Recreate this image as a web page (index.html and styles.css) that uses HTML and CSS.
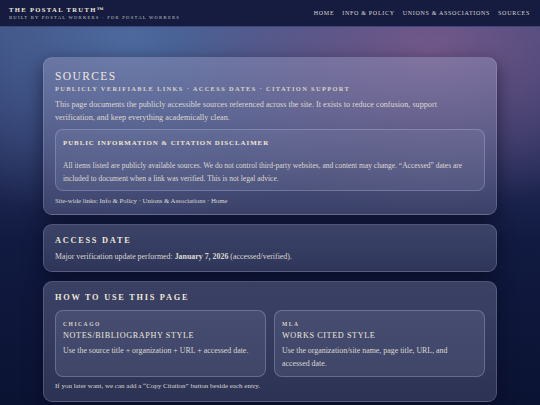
FILE: index.html
```html
<!DOCTYPE html>
<html lang="en">
<head>
<meta charset="utf-8">
<title>Sources · The Postal Truth</title>
<link rel="stylesheet" href="styles.css">
</head>
<body>
<header class="topbar">
  <div class="brand">
    <div class="brand-title">The Postal Truth™</div>
    <div class="brand-sub">Built by Postal Workers · For Postal Workers</div>
  </div>
  <nav class="nav">
    <a href="#">Home</a>
    <a href="#">Info &amp; Policy</a>
    <a href="#">Unions &amp; Associations</a>
    <a href="#">Sources</a>
  </nav>
</header>
<main class="main">
  <section class="card card-hero">
    <h1 class="page-title">Sources</h1>
    <div class="page-sub">Publicly verifiable links · Access dates · Citation support</div>
    <p class="text lead">This page documents the publicly accessible sources referenced across the site. It exists to reduce confusion, support verification, and keep everything academically clean.</p>
    <div class="notice">
      <h3 class="notice-title">Public Information &amp; Citation Disclaimer</h3>
      <p class="text notice-text">All items listed are publicly available sources. We do not control third-party websites, and content may change. “Accessed” dates are included to document when a link was verified. This is not legal advice.</p>
    </div>
    <p class="text small-links">Site-wide links: Info &amp; Policy · Unions &amp; Associations · Home</p>
  </section>
  <section class="card">
    <h2 class="card-title">Access Date</h2>
    <p class="text">Major verification update performed: <strong>January 7, 2026</strong> (accessed/verified).</p>
  </section>
  <section class="card">
    <h2 class="card-title">How to Use This Page</h2>
    <div class="styles-grid">
      <div class="style-box">
        <div class="style-kicker">Chicago</div>
        <div class="style-name">Notes/Bibliography Style</div>
        <p class="text">Use the source title + organization + URL + accessed date.</p>
      </div>
      <div class="style-box">
        <div class="style-kicker">MLA</div>
        <div class="style-name">Works Cited Style</div>
        <p class="text narrow">Use the organization/site name, page title, URL, and accessed date.</p>
      </div>
    </div>
    <p class="text foot">If you later want, we can add a “Copy Citation” button beside each entry.</p>
  </section>
</main>
</body>
</html>
```
FILE: styles.css
```css
* { box-sizing: border-box; }
html, body { margin: 0; padding: 0; }
body {
  width: 540px;
  min-height: 405px;
  font-family: "Liberation Serif", "DejaVu Serif", serif;
  color: #dcd8d0;
  background:
    radial-gradient(ellipse 260px 160px at 430px 50px, rgba(130, 95, 145, 0.8), rgba(130, 95, 145, 0) 100%),
    radial-gradient(ellipse 300px 180px at 130px 40px, rgba(80, 112, 165, 0.85), rgba(80, 112, 165, 0) 100%),
    linear-gradient(180deg, #3c4678 0px, #28305e 140px, #111a40 240px, #0b1333 405px);
  overflow: hidden;
}
.topbar {
  height: 27px;
  display: flex;
  justify-content: space-between;
  align-items: center;
  padding: 0 10px 0 9px;
  background: #161c3f;
  border-bottom: 1px solid #3d4676;
}
.brand-title {
  font-size: 6.6px;
  font-weight: bold;
  letter-spacing: 1.35px;
  text-transform: uppercase;
  color: #efe9de;
  line-height: 8px;
}
.brand-sub {
  font-size: 4.6px;
  letter-spacing: 1.25px;
  text-transform: uppercase;
  color: #c9c6c4;
  line-height: 7px;
}
.nav {
  display: flex;
  gap: 8px;
}
.nav a {
  font-size: 6px;
  letter-spacing: 0.7px;
  text-transform: uppercase;
  color: #d6d3cf;
  text-decoration: none;
}
.main {
  width: 540px;
  padding: 30px 43px 0;
  display: grid;
  grid-template-columns: minmax(0, 1fr);
  row-gap: 9px;
}
.card {
  min-width: 0;
  border-radius: 9px;
  padding: 10px 11px 8px;
  background: linear-gradient(180deg, rgba(120, 125, 160, 0.42), rgba(90, 95, 130, 0.42));
  border: 1px solid rgba(200, 200, 230, 0.22);
  box-shadow: 0 6px 18px rgba(5, 8, 25, 0.55);
}
.card-hero {
  background: linear-gradient(180deg, rgba(150, 150, 190, 0.45), rgba(95, 100, 140, 0.5));
  padding: 11px 11px 6px;
}
.page-title {
  margin: 0;
  font-size: 11.5px;
  font-weight: normal;
  letter-spacing: 1.4px;
  text-transform: uppercase;
  color: #ece6da;
  line-height: 14px;
}
.page-sub {
  font-size: 6.4px;
  font-weight: bold;
  letter-spacing: 1.35px;
  text-transform: uppercase;
  color: #d9d3c6;
  line-height: 9px;
  margin-top: 1px;
}
.text {
  margin: 0;
  font-size: 7.9px;
  line-height: 12.5px;
  color: #dcd8d0;
}
.lead {
  margin-top: 6px;
  font-size: 8.2px;
  max-width: 418px;
}
.notice {
  margin-top: 5px;
  border-radius: 8px;
  padding: 8px 7px 5px;
  background: rgba(150, 155, 195, 0.16);
  border: 1px solid rgba(190, 195, 235, 0.3);
}
.notice-title {
  margin: 0 0 13px;
  font-size: 6.9px;
  font-weight: bold;
  letter-spacing: 0.95px;
  text-transform: uppercase;
  color: #f1e8d2;
  line-height: 9px;
}
.notice-text { font-size: 7.5px; }
.small-links {
  margin-top: 4px;
  font-size: 6.8px;
}
.card-title {
  margin: 0 0 4px;
  font-size: 8.3px;
  font-weight: bold;
  letter-spacing: 1.75px;
  text-transform: uppercase;
  color: #efe7d6;
  line-height: 12px;
}
.styles-grid {
  display: grid;
  grid-template-columns: minmax(0, 1fr) minmax(0, 1fr);
  gap: 8px;
  margin-top: 6px;
}
.style-box {
  border-radius: 8px;
  padding: 10px 7px 6px;
  min-height: 65px;
  background: rgba(150, 155, 195, 0.16);
  border: 1px solid rgba(190, 195, 235, 0.3);
}
.style-kicker {
  font-size: 5.6px;
  font-weight: bold;
  letter-spacing: 1.5px;
  text-transform: uppercase;
  color: #d8d2c6;
  line-height: 7px;
}
.style-name {
  font-size: 8.2px;
  letter-spacing: 0.6px;
  text-transform: uppercase;
  color: #ece6da;
  line-height: 11px;
  margin: 2px 0 4px;
}
.narrow { max-width: 170px; }
.foot {
  margin-top: 3px;
  font-size: 7px;
}
```
